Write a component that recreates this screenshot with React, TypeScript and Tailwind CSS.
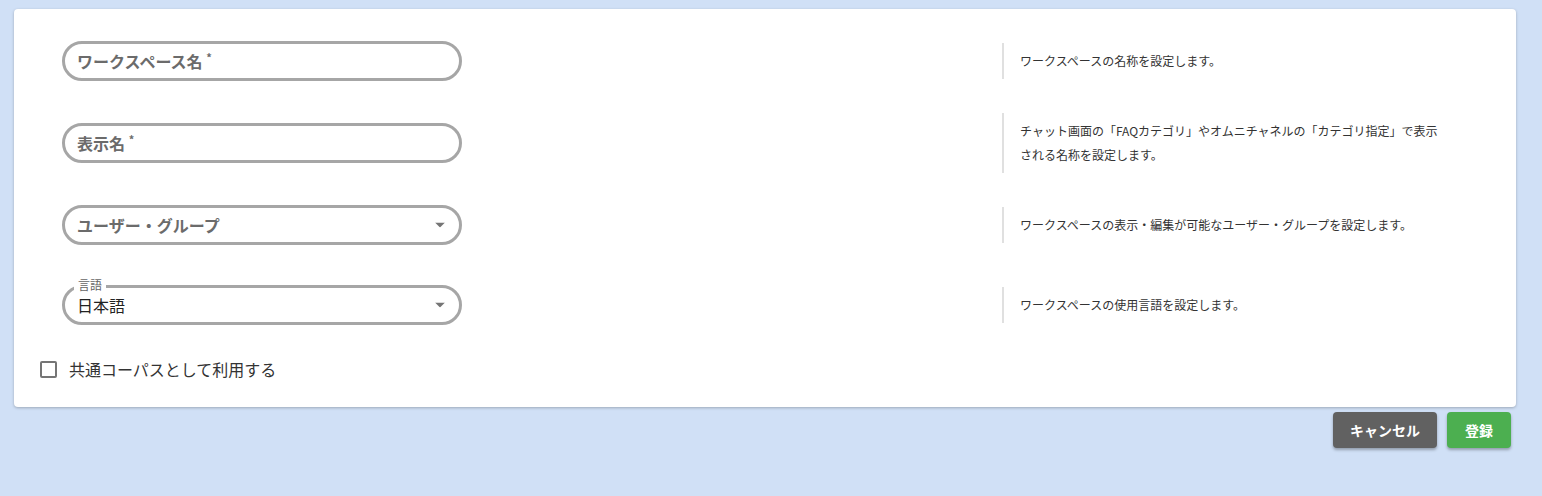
import React, { useState } from 'react';

const jp = { fontFamily: '"Noto Sans CJK JP", "Noto Sans", sans-serif' };

const Caret: React.FC = () => (
  <svg width="10" height="5" viewBox="0 0 10 5" className="absolute right-[14px] top-1/2 -translate-y-1/2">
    <path d="M0 0 L10 0 L5 5 Z" fill="#757575" />
  </svg>
);

const Help: React.FC<{ children: React.ReactNode }> = ({ children }) => (
  <div className="border-l-2 border-[#e0e0e0] pl-4 py-[6px] w-[454px]">
    <p className="text-[12px] leading-6 text-[#333]">{children}</p>
  </div>
);

const App: React.FC = () => {
  const [shared, setShared] = useState(false);

  return (
    <div className="min-h-[496px] bg-[#d0e0f6] pt-[9px]" style={jp}>
      <div className="ml-[14px] w-[1502px] bg-white rounded shadow-[0_1px_3px_rgba(0,0,0,0.25)] pt-8 pb-[26px]">
        <div className="flex flex-col gap-8 pl-12 pr-[60px]">
          <div className="flex items-center justify-between">
            <div className="relative w-[400px] h-10 rounded-full border-[3px] border-[#a6a6a6] flex items-center px-3">
              <span className="text-[16px] font-bold text-[#6b6b6b]">ワークスペース名 <span className="text-[11px] align-top">*</span></span>
            </div>
            <Help>ワークスペースの名称を設定します。</Help>
          </div>

          <div className="flex items-center justify-between">
            <div className="relative w-[400px] h-10 rounded-full border-[3px] border-[#a6a6a6] flex items-center px-3">
              <span className="text-[16px] font-bold text-[#6b6b6b]">表示名 <span className="text-[11px] align-top">*</span></span>
            </div>
            <Help>
              チャット画面の「FAQカテゴリ」やオムニチャネルの「カテゴリ指定」で表示
              <br />
              される名称を設定します。
            </Help>
          </div>

          <div className="flex items-center justify-between">
            <div className="relative w-[400px] h-10 rounded-full border-[3px] border-[#a6a6a6] flex items-center px-3">
              <span className="text-[16px] font-bold text-[#6b6b6b]">ユーザー・グループ</span>
              <Caret />
            </div>
            <Help>ワークスペースの表示・編集が可能なユーザー・グループを設定します。</Help>
          </div>

          <div className="flex items-center justify-between mt-2">
            <div className="relative w-[400px] h-10 rounded-full border-[3px] border-[#a6a6a6] flex items-center px-3">
              <span className="absolute left-[9px] -top-[11px] bg-white px-[4px] text-[12px] leading-4 text-[#666]">言語</span>
              <span className="text-[16px] text-[#222]">日本語</span>
              <Caret />
            </div>
            <Help>ワークスペースの使用言語を設定します。</Help>
          </div>
        </div>

        <label className="mt-8 ml-[26px] flex items-center gap-[12px] cursor-pointer w-fit">
          <span
            onClick={() => setShared(!shared)}
            className={`w-[17px] h-[17px] rounded-[2px] border-2 ${shared ? 'border-[#4caf50] bg-[#4caf50]' : 'border-[#757575] bg-white'}`}
          />
          <span className="text-[16px] leading-6 text-[#333]">共通コーパスとして利用する</span>
        </label>
      </div>

      <div className="flex justify-end gap-[10px] mt-[5px] pr-[31px]">
        <button className="w-[104px] h-9 rounded bg-[#616161] text-white text-[14px] font-bold shadow-[0_2px_3px_rgba(0,0,0,0.3)]">
          キャンセル
        </button>
        <button className="w-16 h-9 rounded bg-[#4caf50] text-white text-[14px] font-bold shadow-[0_2px_3px_rgba(0,0,0,0.3)]">
          登録
        </button>
      </div>
    </div>
  );
};

export default App;
